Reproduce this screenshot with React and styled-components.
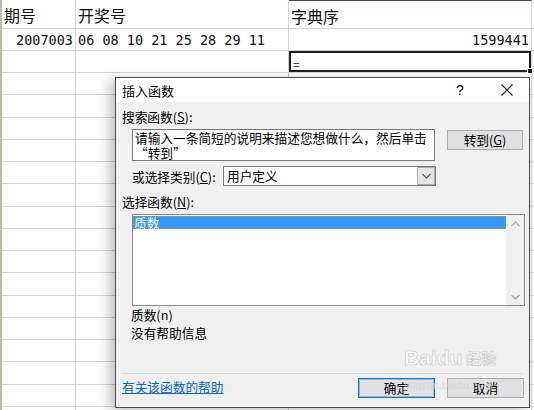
import React from "react";
import styled, { createGlobalStyle } from "styled-components";

const GlobalStyle = createGlobalStyle`
  html, body {
    margin: 0;
    padding: 0;
    background: #fff;
  }
  body {
    font-family: "Noto Sans CJK SC", "Noto Sans", sans-serif;
  }
`;

const Page = styled.div`
  position: relative;
  width: 534px;
  height: 410px;
  overflow: hidden;
  background: #fff;
`;

// 表格
const Sheet = styled.div`
  display: grid;
  grid-template-columns: 74px 213px 243px 2px;
  grid-template-rows: 29px 22px 22px;
  grid-auto-rows: 22.25px;
  border-left: 2px solid #b9b9ad;
`;

const Cell = styled.div`
  box-sizing: border-box;
  position: relative;
  display: flex;
  align-items: center;
  justify-content: ${(p) => (p.$right ? "flex-end" : "flex-start")};
  padding: ${(p) => (p.$head ? "2px 2px 0" : "0 2px")};
  border-right: 1px solid #d4d4d4;
  border-bottom: 1px solid #d4d4d4;
  font-family: ${(p) =>
    p.$mono ? `"DejaVu Sans Mono", monospace` : `"Noto Sans CJK SC", sans-serif`};
  font-size: ${(p) => (p.$mono ? "13.5px" : "16px")};
  color: #111;
  white-space: pre;
  ${(p) => p.$topMark && "border-top: 1px solid #3b3b8f;"}
  ${(p) =>
    p.$active &&
    "box-shadow: inset 0 0 0 2px #1f1f1f; z-index: 1; font-size: 12px; padding-left: 4px; padding-top: 3px;"}
`;

const FillHandle = styled.span`
  position: absolute;
  right: -2px;
  bottom: -2px;
  width: 4px;
  height: 4px;
  background: #1f1f1f;
  border: 1px solid #fff;
`;

// 对话框
const Dialog = styled.div`
  position: absolute;
  left: 115px;
  top: 77px;
  width: 415px;
  height: 331px;
  box-sizing: border-box;
  border: 1px solid #4a4a4a;
  background: #f0f0f0;
  box-shadow: -5px 3px 12px rgba(0, 0, 0, 0.26);
  display: flex;
  flex-direction: column;
  font-family: "Noto Sans CJK SC", sans-serif;
  font-size: 12.7px;
  color: #000;
  z-index: 2;
`;

const TitleBar = styled.div`
  display: flex;
  align-items: center;
  height: 24px;
  background: #fff;
  padding-left: 6px;
`;

const Title = styled.span`
  flex: 1;
  font-size: 13px;
`;

const HelpGlyph = styled.span`
  width: 14px;
  text-align: center;
  font-family: "Liberation Sans", sans-serif;
  font-size: 14px;
  margin-right: 18px;
`;

const CloseButton = styled.span`
  width: 44px;
  height: 24px;
  display: flex;
  align-items: center;
  justify-content: center;
`;

const Body = styled.div`
  flex: 1;
  display: flex;
  flex-direction: column;
  padding: 0 4px 0 6px;
`;

const Label = styled.div`
  line-height: 16px;
  height: 16px;
  margin-top: ${(p) => p.$top || 0}px;
  white-space: nowrap;
`;

const SearchRow = styled.div`
  display: flex;
  align-items: flex-start;
  gap: 12px;
  margin-top: 4px;
  padding-left: 10px;
`;

const SearchBox = styled.div`
  box-sizing: border-box;
  width: 303px;
  height: 32px;
  border: 1px solid #7a7a7a;
  background: #fff;
  padding: 1px 2px;
  line-height: 14.5px;
  white-space: nowrap;
`;

const WinButton = styled.button`
  box-sizing: border-box;
  width: ${(p) => p.$w || 76}px;
  height: 20px;
  margin-top: ${(p) => p.$top || 0}px;
  padding: 0;
  border: 1px solid ${(p) => (p.$primary ? "#0078d7" : "#adadad")};
  box-shadow: ${(p) => (p.$primary ? "inset 0 0 0 1px rgba(0,120,215,0.35)" : "none")};
  background: #e1e1e1;
  font-family: inherit;
  font-size: 12.7px;
  color: #000;
  line-height: 18px;
`;

const CategoryRow = styled.div`
  display: flex;
  align-items: center;
  margin-top: 5px;
  padding-left: 10px;
`;

const CategoryLabel = styled.span`
  width: 91px;
  white-space: nowrap;
`;

const Select = styled.div`
  box-sizing: border-box;
  width: 213px;
  height: 20px;
  display: flex;
  border: 1px solid #7a7a7a;
  background: #fff;
`;

const SelectValue = styled.span`
  flex: 1;
  padding-left: 3px;
  line-height: 18px;
`;

const SelectArrow = styled.span`
  box-sizing: border-box;
  width: 18px;
  height: 18px;
  display: flex;
  align-items: center;
  justify-content: center;
  background: #e5e5e5;
  border: 1px solid #a8a8a8;
`;

const ListBox = styled.div`
  box-sizing: border-box;
  width: 393px;
  height: 92px;
  margin: 4px 0 0 10px;
  border: 1px solid #828790;
  background: #fff;
  display: flex;
`;

const ListItems = styled.div`
  flex: 1;
  padding-top: 1px;
`;

const ListItem = styled.div`
  height: 13px;
  line-height: 13px;
  padding-left: 1px;
  font-size: 12.7px;
  background: ${(p) => (p.$selected ? "#3399ff" : "transparent")};
  color: ${(p) => (p.$selected ? "#fff" : "#000")};
  outline: ${(p) => (p.$selected ? "1px dotted #c98a4a" : "none")};
  outline-offset: -1px;
`;

const ScrollBar = styled.div`
  width: 18px;
  background: #f0f0f0;
  display: flex;
  flex-direction: column;
  justify-content: space-between;
  align-items: center;
  padding: 6px 0 5px;
`;

const Description = styled.div`
  margin-left: 9px;
  line-height: 18px;
`;

const Spacer = styled.div`
  flex: 1;
`;

const Separator = styled.div`
  height: 1px;
  background: #dadada;
  margin-right: 3px;
`;

const Footer = styled.div`
  display: flex;
  align-items: flex-start;
  height: 33px;
  padding-top: 4px;
  box-sizing: border-box;
`;

const HelpLink = styled.a`
  margin-top: 1px;
  line-height: 16px;
  color: #0066cc;
  text-decoration: underline;
`;

const ButtonGroup = styled.div`
  margin-left: auto;
  margin-right: 1px;
  display: flex;
  gap: 12px;
`;

const Watermark = styled.div`
  position: absolute;
  left: 404px;
  top: 346px;
  z-index: 3;
  pointer-events: none;
  color: rgba(255, 255, 255, 0.75);
  -webkit-text-stroke: 0.6px rgba(150, 150, 150, 0.55);
`;

const MarkBrand = styled.div`
  display: flex;
  align-items: flex-end;
  gap: 4px;
  font-family: "Liberation Sans", sans-serif;
  font-weight: 700;
  font-size: 21px;
  line-height: 24px;

  span {
    font-family: "Noto Sans CJK SC", sans-serif;
    font-size: 15px;
    font-weight: 700;
  }
`;

const MarkUrl = styled.div`
  margin-top: 9px;
  font-family: "Liberation Sans", sans-serif;
  font-size: 11px;
  color: rgba(210, 210, 210, 0.8);
  -webkit-text-stroke: 0;
`;

const Chevron = ({ up, color = "#a6a6a6" }) => (
  <svg width="9" height="6" viewBox="0 0 9 6">
    <path
      d={up ? "M0.5 5 L4.5 1 L8.5 5" : "M0.5 1 L4.5 5 L8.5 1"}
      fill="none"
      stroke={color}
      strokeWidth="1.2"
    />
  </svg>
);

const rows = [
  ["期号", "开奖号", "字典序"],
  ["2007003", "06 08 10 21 25 28 29 11", "1599441"],
];

const App = () => {
  const emptyRows = Array.from({ length: 16 });
  return (
    <Page>
      <GlobalStyle />
      <Sheet>
        <Cell $head>{rows[0][0]}</Cell>
        <Cell $head>{rows[0][1]}</Cell>
        <Cell $head $topMark>
          {rows[0][2]}
        </Cell>
        <Cell />
        <Cell $mono $right>
          {rows[1][0]}
        </Cell>
        <Cell $mono>{rows[1][1]}</Cell>
        <Cell $mono $right>
          {rows[1][2]}
        </Cell>
        <Cell />
        <Cell />
        <Cell />
        <Cell $active>
          =
          <FillHandle />
        </Cell>
        <Cell />
        {emptyRows.map((_, i) => (
          <React.Fragment key={i}>
            <Cell />
            <Cell />
            <Cell />
            <Cell />
          </React.Fragment>
        ))}
      </Sheet>

      <Dialog>
        <TitleBar>
          <Title>插入函数</Title>
          <HelpGlyph>?</HelpGlyph>
          <CloseButton>
            <svg width="12" height="12" viewBox="0 0 12 12">
              <path d="M0.5 0.5 L11.5 11.5 M11.5 0.5 L0.5 11.5" stroke="#222" strokeWidth="1.1" />
            </svg>
          </CloseButton>
        </TitleBar>
        <Body>
          <Label $top={7}>
            搜索函数(<u>S</u>):
          </Label>
          <SearchRow>
            <SearchBox>
              请输入一条简短的说明来描述您想做什么，然后单击
              <br />
              “转到”
            </SearchBox>
            <WinButton $top={1}>
              转到(<u>G</u>)
            </WinButton>
          </SearchRow>
          <CategoryRow>
            <CategoryLabel>
              或选择类别(<u>C</u>):
            </CategoryLabel>
            <Select>
              <SelectValue>用户定义</SelectValue>
              <SelectArrow>
                <Chevron color="#555" />
              </SelectArrow>
            </Select>
          </CategoryRow>
          <Label $top={8}>
            选择函数(<u>N</u>):
          </Label>
          <ListBox>
            <ListItems>
              <ListItem $selected>质数</ListItem>
            </ListItems>
            <ScrollBar>
              <Chevron up />
              <Chevron />
            </ScrollBar>
          </ListBox>
          <Description>
            质数(n)
            <br />
            没有帮助信息
          </Description>
          <Spacer />
          <Separator />
          <Footer>
            <HelpLink href="#">有关该函数的帮助</HelpLink>
            <ButtonGroup>
              <WinButton $w={77} $primary>
                确定
              </WinButton>
              <WinButton $w={77}>取消</WinButton>
            </ButtonGroup>
          </Footer>
        </Body>
      </Dialog>

      <Watermark>
        <MarkBrand>
          Baidu<span>经验</span>
        </MarkBrand>
        <MarkUrl>jingyan.baidu.com</MarkUrl>
      </Watermark>
    </Page>
  );
};

export default App;
